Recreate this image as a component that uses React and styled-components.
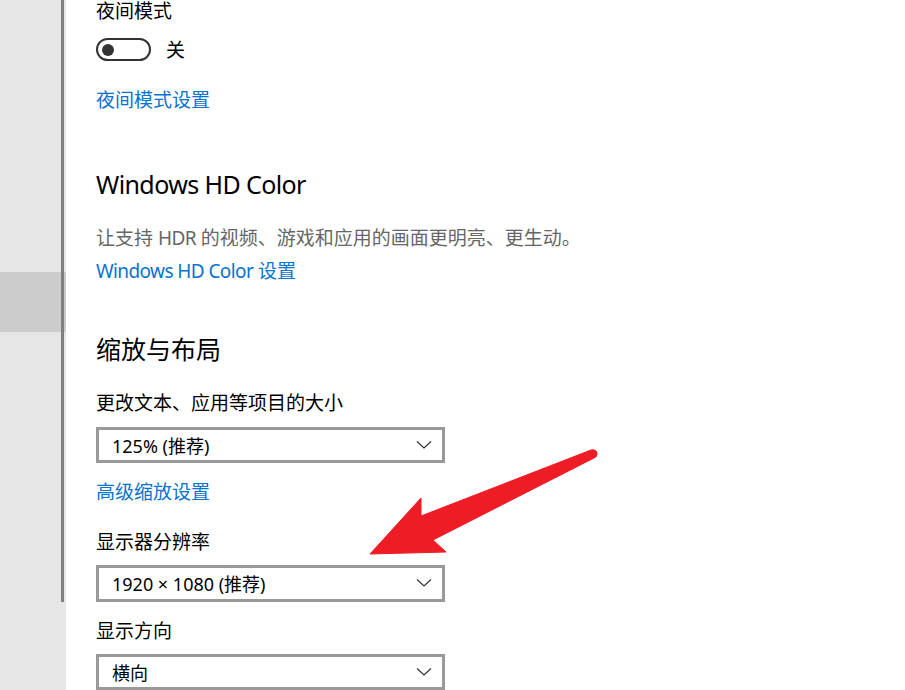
import React from "react";
import styled, { createGlobalStyle } from "styled-components";

const Global = createGlobalStyle`
  html, body {
    margin: 0;
    padding: 0;
    background: #ffffff;
    overflow: hidden;
  }
  body {
    font-family: "Segoe UI", "Noto Sans", "Noto Sans CJK SC", sans-serif;
    color: #000;
  }
`;

const Page = styled.div`
  position: relative;
  display: flex;
  width: 905px;
  height: 690px;
  overflow: hidden;
`;

const Nav = styled.nav`
  position: relative;
  width: 66px;
  flex-shrink: 0;
  background: #e6e6e6;
  display: flex;
  flex-direction: column;
  padding-top: 32px;
  box-sizing: border-box;
`;

const NavItem = styled.div`
  height: 60px;
  background: ${(p) => (p.$active ? "#cccccc" : "transparent")};
`;

const ScrollThumb = styled.div`
  position: absolute;
  top: 0;
  left: 61px;
  width: 3px;
  height: 602px;
  background: #7f7f7f;
`;

const Main = styled.main`
  flex: 1;
  padding-left: 30px;
  display: flex;
  flex-direction: column;
  align-items: flex-start;
`;

const Label = styled.div`
  font-size: 19px;
  line-height: 24px;
  height: 24px;
  margin-top: ${(p) => p.$mt || 0}px;
  color: ${(p) => (p.$muted ? "#666666" : "#000000")};
  white-space: nowrap;
`;

const Heading = styled.h2`
  font-size: 25px;
  font-weight: 400;
  line-height: 34px;
  height: 34px;
  margin: ${(p) => p.$mt || 0}px 0 0;
  white-space: nowrap;
`;

const Latin = styled.span`
  letter-spacing: -0.6px;
`;

const Link = styled.a`
  display: block;
  font-size: 19px;
  line-height: 24px;
  height: 24px;
  margin-top: ${(p) => p.$mt || 0}px;
  color: #0a72cf;
  text-decoration: none;
  white-space: nowrap;
`;

const ToggleRow = styled.div`
  display: flex;
  align-items: center;
  gap: 15px;
  margin-top: 15px;
  height: 23px;
`;

const Toggle = styled.div`
  width: 55px;
  height: 23px;
  box-sizing: border-box;
  border: 2px solid #333333;
  border-radius: 12px;
  display: flex;
  align-items: center;
  padding-left: 4px;
`;

const Knob = styled.span`
  width: 12px;
  height: 12px;
  border-radius: 50%;
  background: #333333;
`;

const ToggleText = styled.span`
  font-size: 19px;
  line-height: 24px;
`;

const Select = styled.div`
  width: 349px;
  height: 38px;
  box-sizing: border-box;
  border: 3px solid #999999;
  margin-top: ${(p) => p.$mt || 0}px;
  display: flex;
  align-items: center;
  justify-content: space-between;
  padding: 0 10px 0 13px;
  font-size: 18px;
  background: #fff;
  white-space: nowrap;
`;

const ArrowLayer = styled.svg`
  position: absolute;
  left: 0;
  top: 0;
  pointer-events: none;
`;

function Chevron() {
  return (
    <svg width="16" height="10" viewBox="0 0 16 10">
      <path d="M1 1.5 L8 8 L15 1.5" fill="none" stroke="#333" strokeWidth="1.2" />
    </svg>
  );
}

function Dropdown({ value, mt }) {
  return (
    <Select $mt={mt}>
      <span>{value}</span>
      <Chevron />
    </Select>
  );
}

export default function App() {
  return (
    <Page>
      <Global />
      <Nav>
        <NavItem />
        <NavItem />
        <NavItem />
        <NavItem />
        <NavItem $active />
        <ScrollThumb />
      </Nav>
      <Main>
        <Label style={{ marginTop: -1 }}>夜间模式</Label>
        <ToggleRow>
          <Toggle>
            <Knob />
          </Toggle>
          <ToggleText>关</ToggleText>
        </ToggleRow>
        <Link $mt={27}>夜间模式设置</Link>

        <Heading $mt={55}>
          <Latin>Windows HD Color</Latin>
        </Heading>
        <Label $mt={25} $muted>
          让支持 <Latin>HDR</Latin> 的视频、游戏和应用的画面更明亮、更生动。
        </Label>
        <Link $mt={9}>
          <Latin>Windows HD Color</Latin> 设置
        </Link>

        <Heading $mt={49}>缩放与布局</Heading>
        <Label $mt={25}>更改文本、应用等项目的大小</Label>
        <Dropdown mt={12} value="125% (推荐)" />
        <Link $mt={17}>高级缩放设置</Link>
        <Label $mt={26}>显示器分辨率</Label>
        <Dropdown mt={11} value="1920 × 1080 (推荐)" />
        <Label $mt={17}>显示方向</Label>
        <Dropdown mt={11} value="横向" />
      </Main>
      <ArrowLayer width="905" height="690" viewBox="0 0 905 690">
        <path
          d="M370 554 L421 498 L421 516 L591 450 Q597 449 597 454 Q597 457 594 458 L433 540 L446 552 Z"
          fill="#ee1c25"
          stroke="#ee1c25"
          strokeWidth="1"
          strokeLinejoin="round"
        />
      </ArrowLayer>
    </Page>
  );
}
